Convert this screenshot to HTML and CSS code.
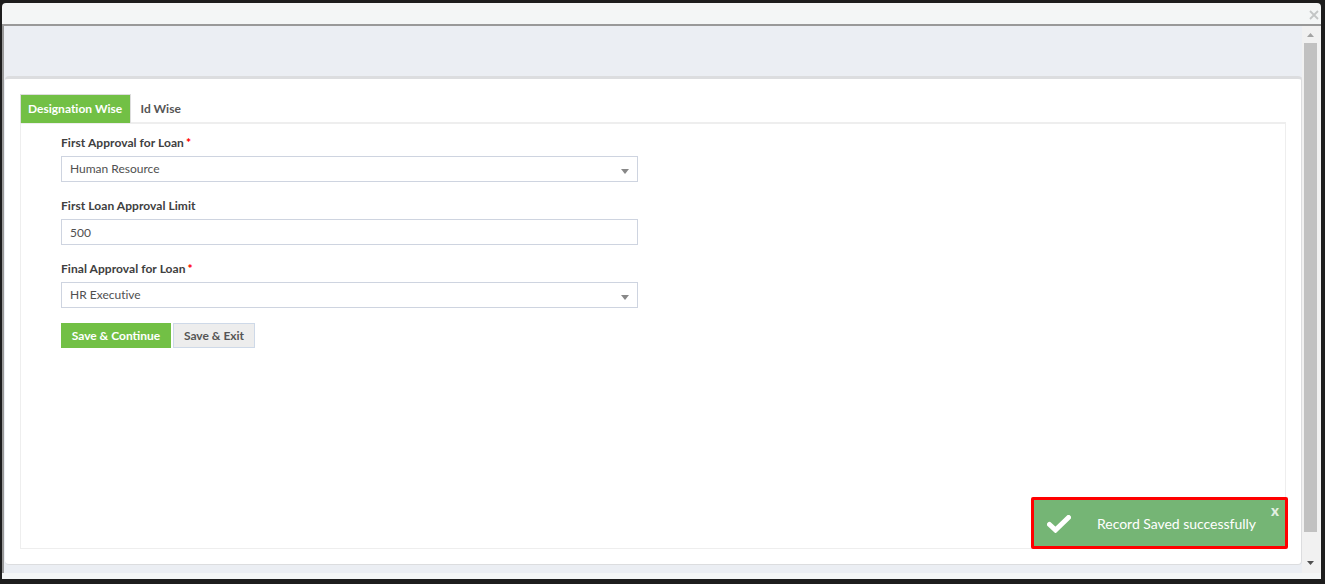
FILE: index.html
```html
<!DOCTYPE html>
<html>
<head>
    <meta charset="utf-8">
    <title>Loan Approval</title>
    <link rel="stylesheet" href="styles.css">
</head>

<body>
    <div class="dialog">
        <div class="dialog-header">
            <svg class="dialog-close" viewBox="0 0 10 10"><path d="M1 1L9 9M9 1L1 9"/></svg>
        </div>

        <div class="frame">
            <div class="page">
                <div class="card">
                    <div class="tabs">
                        <a class="tab active">Designation Wise</a>
                        <a class="tab">Id Wise</a>
                    </div>
                    <form class="panel">
                        <label>First Approval for Loan <b>*</b></label>
                        <div class="field select">Human Resource</div>

                        <label>First Loan Approval Limit</label>
                        <div class="field number">500</div>

                        <label>Final Approval for Loan <b>*</b></label>
                        <div class="field select">HR Executive</div>

                        <div class="buttons">
                            <button type="button" class="btn btn-save">Save &amp; Continue</button>
                            <button type="button" class="btn btn-exit">Save &amp; Exit</button>
                        </div>
                    </form>
                </div>
            </div>

            <div class="scrollbar">
                <svg class="arrow-up" viewBox="0 0 7 4"><path d="M0 4L3.5 0L7 4Z"/></svg>
                <div class="thumb"></div>
                <svg class="arrow-down" viewBox="0 0 7 4"><path d="M0 0L3.5 4L7 0Z"/></svg>
            </div>
        </div>
    </div>

    <!-- save message -->
    <div class="toast">
        <svg class="toast-check" viewBox="0 0 24 18"><path d="M2.5 9.5L8.5 15L21.5 2.5"/></svg>
        <span class="toast-text">Record Saved successfully</span>
        <span class="toast-close">x</span>
    </div>
</body>
</html>
```
FILE: styles.css
```css
* {
    box-sizing: border-box;
}

body {
    background: #1d1d1d;
    color: #505050;
    font-family: Lato, "Liberation Sans", sans-serif;
    font-size: 12px;
    font-variant-ligatures: none;
    height: 584px;
    margin: 0;
    overflow: hidden;
    padding: 3px 4px 5px 2px;
}

.dialog {
    background: #f4f6f6;
    border-radius: 4px 4px 0 0;
    display: flex;
    flex-direction: column;
    height: 576px;
}

.dialog-header {
    display: flex;
    height: 21px;
    justify-content: flex-end;
    padding: 7px 2px 0 0;
}
.dialog-close {
    fill: none;
    height: 10px;
    stroke: #c3c5c5;
    stroke-width: 1.8;
    width: 10px;
}

.frame {
    background: #ebeef3;
    border-left: 2px solid #999;
    border-top: 2px solid #999;
    display: flex;
    height: 549px;
}
.page {
    flex: 1;
    padding: 50px 0 0 1px;
}

.card {
    background: #fff;
    border: 1px solid #dcdddf;
    border-left: 0;
    border-radius: 4px;
    border-top-width: 3px;
    height: 489px;
    padding: 15px 15px 0;
    width: 1297px;
}

.tabs {
    display: flex;
    height: 28px;
}
.tab {
    color: #555;
    font-weight: bold;
    line-height: 30px;
    padding-left: 9.5px;
}
.tab.active {
    background: #72c045;
    border: 1px solid #ddd;
    border-bottom: 0;
    color: #fff;
    height: 29px;
    line-height: 28px;
    padding-left: 7px;
    position: relative;
    width: 111px;
}

.panel {
    border: 1px solid #eee;
    border-top-width: 2px;
    height: 427px;
    padding: 10px 40px;
}
.panel label {
    color: #404040;
    display: block;
    font-weight: bold;
    height: 22px;
    letter-spacing: 0.06px;
    line-height: 18px;
}
.panel label b {
    color: #f00;
    margin-left: -1px;
}

.field {
    align-items: center;
    border: 1px solid #ced4e0;
    display: flex;
    height: 26px;
    justify-content: space-between;
    margin-bottom: 15px;
    padding: 0 8px 1px;
    width: 577px;
}
.field.number {
    padding: 1px 8px 0;
}
.select::after {
    border: 4px solid transparent;
    border-bottom: 0;
    border-top: 5px solid #888;
    content: "";
    margin-top: 6px;
}

.buttons {
    display: flex;
    gap: 2px;
}
.btn {
    border: 1px solid #72c045;
    font-family: inherit;
    font-size: 12px;
    font-weight: bold;
    height: 25px;
    padding: 0;
}
.btn-save {
    background: #72c045;
    color: #fff;
    width: 110px;
}
.btn-exit {
    background: #ededed;
    border-color: #ced9e8;
    color: #555;
    width: 82px;
}

.scrollbar {
    align-items: center;
    background: #f1f1f1;
    display: flex;
    flex-direction: column;
    padding: 7px 4px 0 2px;
    width: 19px;
}
.scrollbar svg {
    height: 4px;
    width: 7px;
}
.arrow-up {
    fill: #a3a3a3;
}
.arrow-down {
    fill: #505050;
}
.thumb {
    background: #c1c1c1;
    height: 489px;
    margin: 6px 0 29px;
    width: 13px;
}

.toast {
    align-items: center;
    background: #75b575;
    border: 3px solid #f00;
    border-radius: 2px;
    color: #fff;
    display: flex;
    height: 52px;
    left: 1031px;
    padding: 1px 0 0 13px;
    position: absolute;
    top: 497px;
    width: 257px;
}
.toast-check {
    fill: none;
    height: 18px;
    stroke: #fff;
    stroke-linecap: round;
    stroke-width: 5;
    width: 24px;
}
.toast-text {
    font-size: 14px;
    letter-spacing: -0.03px;
    margin-left: 26px;
    white-space: nowrap;
}
.toast-close {
    color: #e3f0e3;
    font-size: 15px;
    font-weight: 900;
    line-height: 14px;
    position: absolute;
    right: 6px;
    top: 3px;
}
```
